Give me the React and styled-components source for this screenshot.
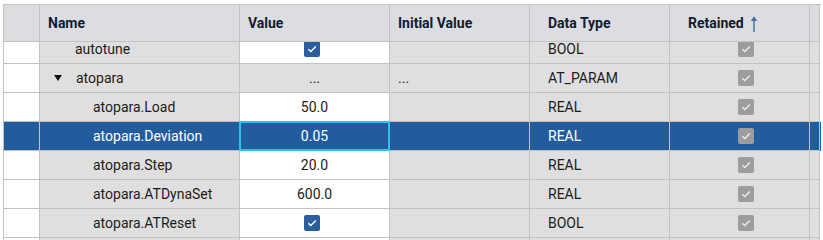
import React from 'react';
import styled, { createGlobalStyle } from 'styled-components';

const GlobalStyles = createGlobalStyle`
  html, body {
    margin: 0;
    padding: 0;
    background: #ffffff;
    font-family: Roboto, 'Liberation Sans', sans-serif;
  }
`;

const COLS = '36px 200px 150px 140px 140px 140px 10px';

const Page = styled.div`
  width: 823px;
  height: 240px;
  overflow: hidden;
  padding: 4px 0 0 3px;
  box-sizing: border-box;
`;

const Table = styled.div`
  width: 817px;
  border-left: 1px solid #c2c2c2;
  border-top: 1px solid #c2c2c2;
`;

const HeaderRow = styled.div`
  display: grid;
  grid-template-columns: ${COLS};
  height: 37px;
`;

const HeadCell = styled.div`
  display: flex;
  align-items: center;
  gap: 6px;
  padding-left: ${(p) => p.$pad ?? 8}px;
  background: #dcdde0;
  border-right: 1px solid #c2c2c2;
  border-bottom: 1px solid #c2c2c2;
  font-size: 14px;
  font-weight: 700;
  color: #111a33;
  box-sizing: border-box;
`;

const Body = styled.div`
  height: 198px;
  overflow: hidden;
`;

const Scroller = styled.div`
  margin-top: -7px;
`;

const Row = styled.div`
  display: grid;
  grid-template-columns: ${COLS};
  height: 29px;
  background: ${(p) => (p.$selected ? '#235c9c' : 'transparent')};
  color: ${(p) => (p.$selected ? '#ffffff' : '#1c1c1c')};
`;

const Cell = styled.div`
  display: flex;
  align-items: center;
  justify-content: ${(p) => (p.$center ? 'center' : 'flex-start')};
  padding-left: ${(p) => p.$pad || 0}px;
  background: ${(p) => (p.$selected ? '#235c9c' : p.$white ? '#ffffff' : '#dfdfdf')};
  border-right: 1px solid #c2c2c2;
  border-bottom: 1px solid #c2c2c2;
  font-size: 14px;
  box-sizing: border-box;
  white-space: nowrap;
  overflow: hidden;
`;

const FocusCell = styled(Cell)`
  border: 2px solid #29c4ee;
  margin: -1px 0 0 -1px;
`;

const Caret = styled.span`
  display: inline-block;
  width: 0;
  height: 0;
  border-left: 4px solid transparent;
  border-right: 4px solid transparent;
  border-top: 6px solid #111;
  margin-right: 14px;
`;

const Box = styled.span`
  display: inline-flex;
  align-items: center;
  justify-content: center;
  width: 16px;
  height: 16px;
  border-radius: 2px;
  background: ${(p) => (p.$disabled ? '#9d9d9d' : '#2a5e9d')};
  margin-left: ${(p) => p.$shift || 0}px;
`;

const Check = ({ disabled, shift }) => (
  <Box $disabled={disabled} $shift={shift}>
    <svg width="12" height="12" viewBox="0 0 12 12">
      <path d="M2.3 6.3 L4.8 8.6 L9.8 3.4" fill="none" stroke={disabled ? '#ececec' : '#ffffff'} strokeWidth="1.4" />
    </svg>
  </Box>
);

const SortArrow = () => (
  <svg width="8" height="17" viewBox="0 0 8 17">
    <path d="M4 2 L4 17" stroke="#3d6f9f" strokeWidth="1.4" />
    <path d="M0.8 6 L4 1.5 L7.2 6 Z" fill="#3d6f9f" />
  </svg>
);

const rows = [
  { name: 'autotune', indent: 35, value: 'check', valueWhite: true, type: 'BOOL' },
  { name: 'atopara', indent: 14, caret: true, value: '...', init: '...', type: 'AT_PARAM' },
  { name: 'atopara.Load', indent: 53, value: '50.0', valueWhite: true, type: 'REAL' },
  { name: 'atopara.Deviation', indent: 53, value: '0.05', type: 'REAL', selected: true },
  { name: 'atopara.Step', indent: 53, value: '20.0', valueWhite: true, type: 'REAL' },
  { name: 'atopara.ATDynaSet', indent: 53, value: '600.0', valueWhite: true, type: 'REAL' },
  { name: 'atopara.ATReset', indent: 53, value: 'check', valueWhite: true, type: 'BOOL' },
  { name: 'next', indent: 53, value: '', valueWhite: true, type: '' },
];

export default function App() {
  return (
    <Page>
      <GlobalStyles />
      <Table>
        <HeaderRow>
          <HeadCell />
          <HeadCell>Name</HeadCell>
          <HeadCell>Value</HeadCell>
          <HeadCell>Initial Value</HeadCell>
          <HeadCell $pad={18}>Data Type</HeadCell>
          <HeadCell $pad={18}>
            Retained <SortArrow />
          </HeadCell>
          <HeadCell $pad={0} />
        </HeaderRow>
        <Body>
          <Scroller>
            {rows.map((r) => {
              const sel = r.selected;
              const ValueCell = sel ? FocusCell : Cell;
              const label = r.name === 'next' ? '' : r.name;
              return (
                <Row key={r.name} $selected={sel}>
                  <Cell $white={!sel} $selected={sel} />
                  <Cell $selected={sel} $pad={r.indent}>
                    {r.caret && <Caret />}
                    {label}
                  </Cell>
                  <ValueCell $center $white={r.valueWhite} $selected={sel}>
                    {r.value === 'check' ? <Check shift={-6} /> : r.value}
                  </ValueCell>
                  <Cell $selected={sel} $pad={8}>{r.init}</Cell>
                  <Cell $selected={sel} $pad={18}>{r.type}</Cell>
                  <Cell $selected={sel} $pad={68}>
                    <Check disabled />
                  </Cell>
                  <Cell $selected={sel} />
                </Row>
              );
            })}
          </Scroller>
        </Body>
      </Table>
    </Page>
  );
}
